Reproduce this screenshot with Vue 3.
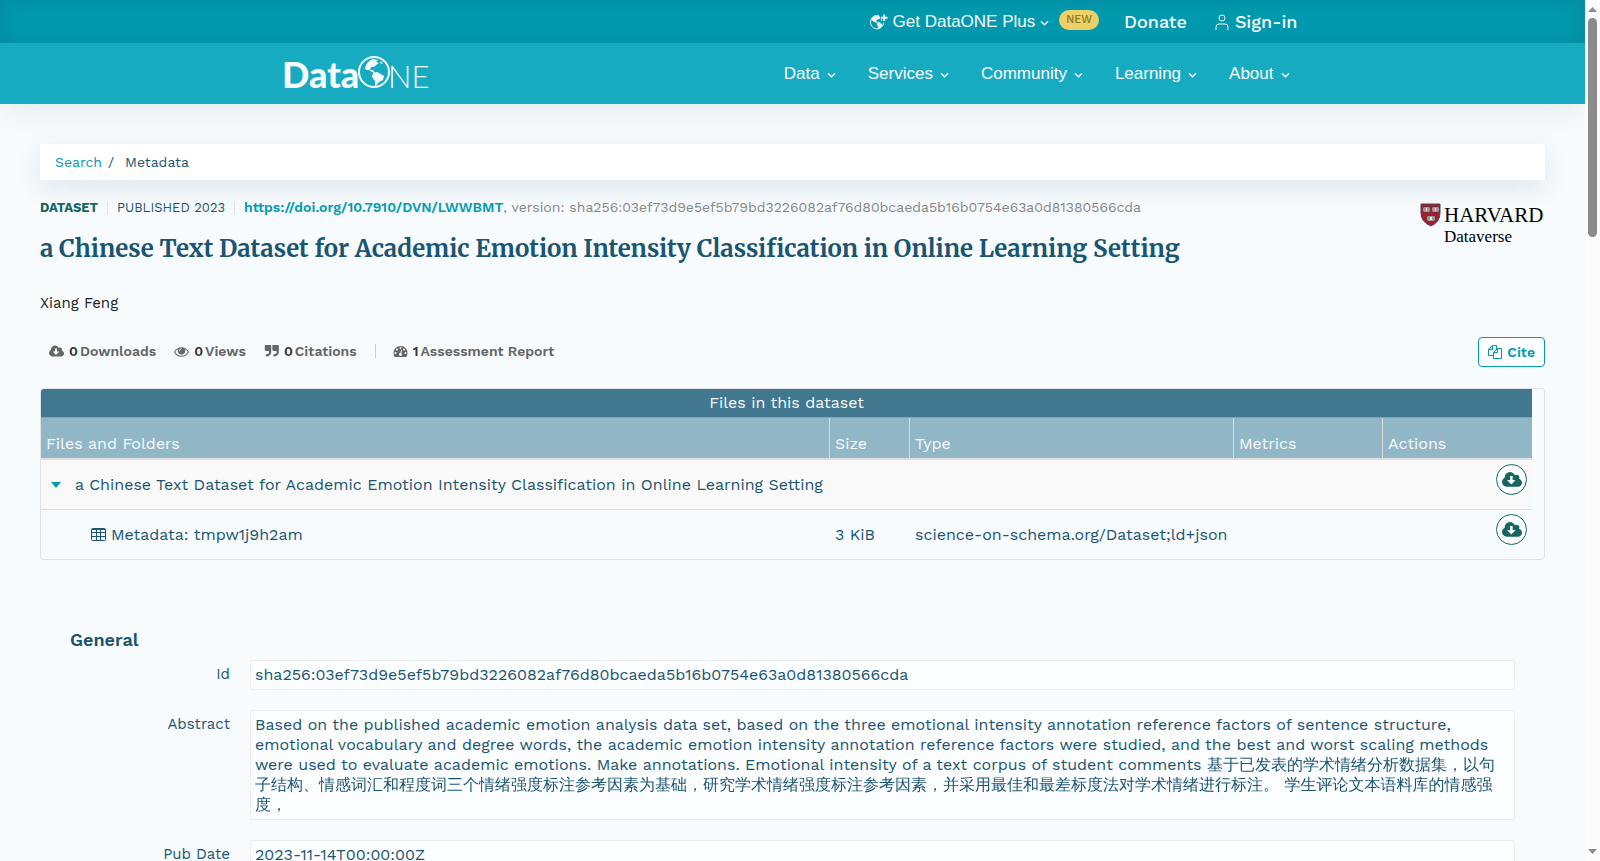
<script setup>
import { ref } from 'vue';

const navItems = ['Data', 'Services', 'Community', 'Learning', 'About'];

const icons = {
  cloud: {
    box: '-64 128 1920 1536',
    path: 'M1216 928q0-14-9-23t-23-9h-224v-352q0-13-9.5-22.5t-22.5-9.5h-192q-13 0-22.5 9.5t-9.5 22.5v352h-224q-13 0-22.5 9.5t-9.5 22.5q0 14 9 23l352 352q9 9 23 9t23-9l351-351q10-12 10-24zm640 224q0 159-112.5 271.5t-271.5 112.5h-1088q-185 0-316.5-131.5t-131.5-316.5q0-130 70-240t188-165q-2-30-2-43 0-212 150-362t362-150q156 0 285.5 87t188.5 231q71-62 166-62 106 0 181 75t75 181q0 76-41 138 130 31 213.5 135.5t83.5 238.5z',
  },
  eye: {
    box: '0 128 1792 1536',
    path: 'M1664 960q-152-236-381-353 61 104 61 225 0 185-131.5 316.5t-316.5 131.5-316.5-131.5-131.5-316.5q0-121 61-225-229 117-381 353 133 205 333.5 326.5t434.5 121.5 434.5-121.5 333.5-326.5zm-720-384q0-20-14-34t-34-14q-125 0-214.5 89.5t-89.5 214.5q0 20 14 34t34 14 34-14 14-34q0-86 61-147t147-61q20 0 34-14t14-34zm848 384q0 34-20 69-140 230-376.5 368.5t-499.5 138.5-499.5-139-376.5-368q-20-35-20-69t20-69q140-229 376.5-368t499.5-139 499.5 139 376.5 368q20 35 20 69z',
  },
  quote: {
    box: '0 192 1728 1536',
    path: 'M832 320v704q0 104-40.5 198.5t-109.5 163.5-163.5 109.5-198.5 40.5h-64q-26 0-45-19t-19-45v-128q0-26 19-45t45-19h64q106 0 181-75t75-181v-32q0-40-28-68t-68-28h-224q-80 0-136-56t-56-136v-384q0-80 56-136t136-56h384q80 0 136 56t56 136zm896 0v704q0 104-40.5 198.5t-109.5 163.5-163.5 109.5-198.5 40.5h-64q-26 0-45-19t-19-45v-128q0-26 19-45t45-19h64q106 0 181-75t75-181v-32q0-40-28-68t-68-28h-224q-80 0-136-56t-56-136v-384q0-80 56-136t136-56h384q80 0 136 56t56 136z',
  },
  gauge: {
    box: '0 128 1792 1664',
    path: 'M384 1152q0-53-37.5-90.5t-90.5-37.5-90.5 37.5-37.5 90.5 37.5 90.5 90.5 37.5 90.5-37.5 37.5-90.5zm192-448q0-53-37.5-90.5t-90.5-37.5-90.5 37.5-37.5 90.5 37.5 90.5 90.5 37.5 90.5-37.5 37.5-90.5zm428 481l101-382q6-26-7.5-48.5t-38.5-29.5-48 6.5-30 39.5l-101 382q-60 5-107 43.5t-63 98.5q-20 77 20 146t117 89 146-20 89-117q16-60-6-117t-72-91zm660-33q0-53-37.5-90.5t-90.5-37.5-90.5 37.5-37.5 90.5 37.5 90.5 90.5 37.5 90.5-37.5 37.5-90.5zm-640-640q0-53-37.5-90.5t-90.5-37.5-90.5 37.5-37.5 90.5 37.5 90.5 90.5 37.5 90.5-37.5 37.5-90.5zm448 192q0-53-37.5-90.5t-90.5-37.5-90.5 37.5-37.5 90.5 37.5 90.5 90.5 37.5 90.5-37.5 37.5-90.5zm320 448q0 261-141 483-19 29-54 29h-1402q-35 0-54-29-141-221-141-483 0-182 71-348t191-286 286-191 348-71 348 71 286 191 191 286 71 348z',
  },
};

const metrics = [
  { icon: icons.cloud, count: 0, label: 'Downloads' },
  { icon: icons.eye, count: 0, label: 'Views' },
  { icon: icons.quote, count: 0, label: 'Citations' },
  { icon: icons.gauge, count: 1, label: 'Assessment Report', divided: true },
];

const title = 'a Chinese Text Dataset for Academic Emotion Intensity Classification in Online Learning Setting';

const expanded = ref(true);

const fields = [
  { label: 'Id', value: 'sha256:03ef73d9e5ef5b79bd3226082af76d80bcaeda5b16b0754e63a0d81380566cda' },
  {
    label: 'Abstract',
    value:
      'Based on the published academic emotion analysis data set, based on the three emotional intensity annotation reference factors of sentence structure, emotional vocabulary and degree words, the academic emotion intensity annotation reference factors were studied, and the best and worst scaling methods were used to evaluate academic emotions. Make annotations. Emotional intensity of a text corpus of student comments 基于已发表的学术情绪分析数据集，以句子结构、情感词汇和程度词三个情绪强度标注参考因素为基础，研究学术情绪强度标注参考因素，并采用最佳和最差标度法对学术情绪进行标注。 学生评论文本语料库的情感强度，',
  },
  { label: 'Pub Date', value: '2023-11-14T00:00:00Z' },
];
</script>

<template>
  <div class="window">
    <div class="page">
      <header>
        <div class="top-bar">
          <div class="container top-links">
            <button type="button" class="nav-button plus">
              <svg class="plus-globe" viewBox="0 0 20 18" fill="none">
                <path d="M15.5 9.5A7 7 0 1 1 10.5 2.500" stroke="currentColor" />
                <path
                  d="M2 6Q4 2 8 2L11 3 12 5 10 6 8 7 8 9 10 10 8 10 4 8ZM9 10L11 9 14 12 13 14 10 16 9 13 8 12ZM12 6L14 7 13 8Z"
                  fill="currentColor"
                />
                <path d="M16 1v7M12.500 4.500h7" stroke="currentColor" stroke-width="2" />
              </svg>
              Get DataONE Plus
              <svg class="chevron" viewBox="0 0 10 7"><path d="M1 1l4 4 4-4" /></svg>
            </button>
            <span class="badge">NEW</span>
            <a href="#donate" class="top-link donate">Donate</a>
            <a href="#signin" class="top-link signin">
              <svg viewBox="0 0 14 16" fill="none" stroke="currentColor">
                <circle cx="7" cy="4" r="3" />
                <path d="M1 16v-3q0-3 3-3h6q3 0 3 3v3" />
              </svg>
              Sign-in
            </a>
          </div>
        </div>
        <div class="main-bar">
          <div class="container main-nav">
            <a href="#home" class="logo" aria-label="DataONE">
              <svg viewBox="0 0 146 32" fill="currentColor">
                <text x="-3" y="32" class="logo-bold">Data</text>
                <circle cx="89" cy="16" r="15" fill="none" stroke="currentColor" stroke-width="2" />
                <path
                  d="M80 12Q82 5 88 3L93 4 91 6 94 7 91 9 89 11 86 11 85 14 88 14 90 17 87 16 84 14 81 14ZM88 17L92 16 99 20 98 24 94 26 91 30 90 30 90 25 87 21ZM95 5L98 7 96 8Z"
                />
                <text x="103" y="32" class="logo-thin">NE</text>
              </svg>
            </a>
            <nav>
              <button v-for="item in navItems" :key="item" type="button" class="nav-button">
                {{ item }}
                <svg class="chevron" viewBox="0 0 10 7"><path d="M1 1l4 4 4-4" /></svg>
              </button>
            </nav>
          </div>
        </div>
      </header>

      <main>
        <div class="breadcrumb">
          <a href="#search">Search</a><span class="slash">/</span><span>Metadata</span>
        </div>

        <div class="citation-head">
          <div class="citation-text">
            <p class="identifiers">
              <strong class="kind">DATASET</strong>
              <span class="published">PUBLISHED 2023</span>
              <span class="version"><a href="#doi">https://doi.org/10.7910/DVN/LWWBMT</a>, version: sha256:03ef73d9e5ef5b79bd3226082af76d80bcaeda5b16b0754e63a0d81380566cda</span>
            </p>
            <h1>{{ title }}</h1>
          </div>
          <svg class="harvard" viewBox="0 0 124 42">
            <path d="M0 1h19v9q0 9-9 13Q0 19 0 10Z" fill="#a51c30" stroke="#4a4a4a" />
            <g fill="#eee" stroke="#444">
              <rect x="2" y="4" width="7" height="5" />
              <rect x="11" y="4" width="7" height="5" />
              <rect x="6" y="13" width="8" height="5" />
            </g>
            <path d="M4 5v3M7 5v3M13 5v3M16 5v3M8 14v3M12 14v3" stroke="#a51c30" />
            <text x="23" y="19" class="harvard-name">HARVARD</text>
            <text x="23" y="39" class="harvard-sub">Dataverse</text>
          </svg>
        </div>

        <p class="author">Xiang Feng</p>

        <div class="toolbar">
          <ul class="metrics">
            <li v-for="metric in metrics" :key="metric.label" :class="{ divided: metric.divided }">
              <svg :viewBox="metric.icon.box" fill="currentColor"><path :d="metric.icon.path" /></svg>
              <b>{{ metric.count }}</b>
              <span>{{ metric.label }}</span>
            </li>
          </ul>
          <button type="button" class="cite">
            <svg viewBox="0 0 1792 1792" fill="currentColor">
              <path
                d="M1696 384q40 0 68 28t28 68v1216q0 40-28 68t-68 28h-960q-40 0-68-28t-28-68v-288h-544q-40 0-68-28t-28-68v-672q0-40 20-88t48-76l408-408q28-28 76-48t88-20h416q40 0 68 28t28 68v328q68-40 128-40h416zm-544 213l-299 299h299v-299zm-640-384l-299 299h299v-299zm196 647l316-316v-416h-384v416q0 40-28 68t-68 28h-416v640h512v-256q0-40 20-88t48-76zm956 804v-1152h-384v416q0 40-28 68t-68 28h-416v640h896z"
              />
            </svg>
            Cite
          </button>
        </div>

        <section class="files">
          <table>
            <caption>Files in this dataset</caption>
            <colgroup>
              <col class="col-name" />
              <col class="col-size" />
              <col class="col-type" />
              <col class="col-metrics" />
              <col class="col-actions" />
            </colgroup>
            <thead>
              <tr>
                <th>Files and Folders</th>
                <th>Size</th>
                <th>Type</th>
                <th>Metrics</th>
                <th>Actions</th>
              </tr>
            </thead>
            <tbody>
              <tr class="folder">
                <td colspan="4">
                  <div class="folder-name">
                    <button type="button" class="toggle" aria-label="Toggle folder" @click="expanded = !expanded">
                      <svg viewBox="0 0 10 6"><path d="M0 0h10L5 6Z" fill="currentColor" /></svg>
                    </button>
                    {{ title }}
                  </div>
                </td>
                <td class="actions">
                  <button type="button" class="download" aria-label="Download all">
                    <svg :viewBox="icons.cloud.box" fill="currentColor"><path :d="icons.cloud.path" /></svg>
                  </button>
                </td>
              </tr>
              <tr v-if="expanded">
                <td>
                  <div class="file-name">
                    <svg viewBox="0 0 15 13" fill="none" stroke="currentColor">
                      <rect x="0.500" y="0.500" width="14" height="12" rx="1" />
                      <path d="M1 1.500h13M1 4.500h13M1 8.500h13M5.500 2v10M9.500 2v10" />
                    </svg>
                    Metadata: tmpw1j9h2am
                  </div>
                </td>
                <td>3 KiB</td>
                <td>science-on-schema.org/Dataset;ld+json</td>
                <td></td>
                <td class="actions">
                  <button type="button" class="download" aria-label="Download file">
                    <svg :viewBox="icons.cloud.box" fill="currentColor"><path :d="icons.cloud.path" /></svg>
                  </button>
                </td>
              </tr>
            </tbody>
          </table>
        </section>

        <section class="general">
          <h2>General</h2>
          <dl>
            <div v-for="field in fields" :key="field.label" class="field">
              <dt>{{ field.label }}</dt>
              <dd>{{ field.value }}</dd>
            </div>
          </dl>
        </section>
      </main>
    </div>

    <div class="scrollbar" aria-hidden="true">
      <svg viewBox="0 0 9 5"><path d="M0 5h9L4.500 0Z" /></svg>
      <div class="track"><div class="thumb"></div></div>
      <svg viewBox="0 0 9 5"><path d="M0 0h9L4.500 5Z" /></svg>
    </div>
  </div>
</template>

<style>
body {
  margin: 0;
  overflow: hidden;
}
</style>

<style scoped>
.window {
  display: grid;
  grid-template-columns: minmax(0, 1fr) 15px;
  height: 100vh;
  background: #f7fbfe;
  color: #1a5571;
  font-family: 'Work Sans', Inter, 'WenQuanYi Zen Hei', 'Noto Sans CJK SC', sans-serif;
  font-size: 16px;
  line-height: 20px;
}

.page {
  overflow: hidden;
}

a {
  color: #029bb0;
  text-decoration: none;
}

button {
  font: inherit;
  cursor: pointer;
}

p,
h1,
h2,
ul,
dl,
dd {
  margin: 0;
  padding: 0;
}

header {
  box-shadow: 0 4px 32px rgba(60, 80, 90, 0.1);
}

.container {
  display: flex;
  align-items: center;
  width: 1016px;
  max-width: 100%;
  height: 100%;
  margin: 0 auto;
}

.top-bar {
  height: 43px;
  background: #029bb0;
  box-shadow: inset 0 0 24px rgba(0, 110, 130, 0.4);
}

.top-links {
  justify-content: flex-end;
}

.nav-button {
  display: flex;
  align-items: center;
  gap: 7px;
  padding: 0;
  border: 0;
  background: none;
  color: #f7fbff;
  font-family: 'Liberation Sans', Arial, sans-serif;
  font-size: 17px;
}

.plus {
  gap: 5px;
}

.plus-globe {
  width: 19px;
  height: 18px;
}

.chevron {
  width: 9px;
  height: 7px;
  margin-top: 4px;
  fill: none;
  stroke: currentColor;
  stroke-width: 1.5;
}

.badge {
  margin: 0 25px 4px 10px;
  padding: 0 7px;
  border-radius: 10px;
  background: #ecd068;
  color: #8a7420;
  font-size: 11px;
  font-weight: 500;
}

.top-link {
  display: flex;
  align-items: center;
  gap: 6px;
  color: #f7fbff;
  font-size: 18px;
  font-weight: 500;
}

.donate {
  margin-right: 28px;
}

.signin {
  margin-right: 3px;
}

.signin svg {
  width: 14px;
  height: 16px;
}

.main-bar {
  height: 61px;
  background: #17abc1;
}

.main-nav {
  justify-content: space-between;
}

.main-nav nav {
  display: flex;
  gap: 32px;
  margin-right: 11px;
}

.logo {
  margin-bottom: 4px;
  color: #f7fbff;
}

.logo svg {
  display: block;
  width: 146px;
  height: 32px;
  overflow: visible;
}

.logo-bold {
  font: 900 36px Lato, sans-serif;
}

.logo-thin {
  font: 300 31px Lato, sans-serif;
}

main {
  padding: 40px;
}

.breadcrumb {
  display: flex;
  align-items: center;
  height: 36px;
  padding: 0 15px;
  border-radius: 2px;
  background: #fff;
  box-shadow: 0 8px 24px rgba(60, 80, 90, 0.12);
  font-size: 14px;
}

.slash {
  margin: 0 11px 0 6px;
}

.citation-head {
  display: flex;
  justify-content: space-between;
  margin-top: 17px;
}

.identifiers {
  display: flex;
  align-items: baseline;
  font-size: 13px;
}

.identifiers > * + *::before {
  content: '';
  display: inline-block;
  width: 1px;
  height: 14px;
  margin: 0 9px;
  background: #dde3e6;
  vertical-align: -3px;
}

.kind {
  color: #146660;
}

.version {
  color: #888;
  font-size: 14px;
}

.version a {
  font-weight: 600;
}

h1 {
  margin-top: 13px;
  font: 700 24px/36px 'Merriweather', 'DejaVu Serif Condensed', 'Liberation Serif', serif;
}

.harvard {
  flex: none;
  width: 124px;
  height: 42px;
  margin-top: 6px;
  overflow: visible;
}

.harvard-name {
  font: 21px 'Liberation Serif', serif;
}

.harvard-sub {
  font: 17px 'Liberation Serif', serif;
}

.author {
  margin-top: 26px;
  color: #222;
  font-size: 15px;
}

.toolbar {
  display: flex;
  align-items: center;
  justify-content: space-between;
  margin-top: 24px;
}

.metrics {
  display: flex;
  gap: 18px;
  margin-bottom: 2px;
  padding-left: 9px;
  color: #666;
  font-size: 14px;
  font-weight: 600;
  list-style: none;
}

.metrics li {
  display: flex;
  align-items: center;
}

.metrics svg {
  width: 15px;
  height: 13px;
  margin-right: 5px;
}

.metrics b {
  margin-right: 2px;
  color: #333;
  font-weight: 600;
}

.metrics .divided::before {
  content: '';
  width: 1px;
  height: 14px;
  margin-right: 17px;
  background: #ccc;
}

.cite {
  display: flex;
  align-items: center;
  gap: 5px;
  height: 30px;
  padding: 0 9px;
  border: 1px solid #029bb0;
  border-radius: 4px;
  background: #fff;
  color: #029bb0;
  font-size: 14px;
  font-weight: 600;
}

.cite svg {
  width: 14px;
  height: 14px;
}

.files {
  margin-top: 21px;
  padding-right: 12px;
  border: 1px solid #dfe3e6;
  border-radius: 4px;
  overflow: hidden;
}

table {
  width: 100%;
  border-spacing: 0;
  table-layout: fixed;
}

caption {
  height: 28px;
  border-bottom: 1px solid #82a4b3;
  background: #41788f;
  color: #f7fbff;
  line-height: 28px;
}

.col-size {
  width: 80px;
}

.col-type {
  width: 324px;
}

.col-metrics {
  width: 149px;
}

.col-actions {
  width: 150px;
}

th {
  height: 20px;
  padding: 16px 5px 4px;
  border-bottom: 2px solid #ddd;
  background: #91b6c5;
  color: #f7fbff;
  font-weight: 400;
  text-align: left;
}

th + th {
  border-left: 1px solid #ddd;
}

td {
  height: 49px;
  padding: 0 0 0 6px;
  white-space: nowrap;
}

.folder td {
  border-bottom: 1px solid #ddd;
  background: #f9f9f9;
}

.folder-name {
  display: flex;
  align-items: center;
}

.toggle {
  width: 10px;
  margin: 0 14px 0 4px;
  padding: 0;
  border: 0;
  background: none;
  color: #029bb0;
}

.toggle svg {
  display: block;
  width: 10px;
}

.file-name {
  display: flex;
  align-items: center;
  gap: 5px;
  padding-left: 44px;
}

.file-name svg {
  width: 15px;
  height: 13px;
}

.actions {
  padding: 4px 5px 0 0;
  vertical-align: top;
  height: 45px;
}

.download {
  display: flex;
  align-items: center;
  justify-content: center;
  width: 31px;
  height: 31px;
  margin-left: auto;
  padding: 0;
  border: 1px solid #146660;
  border-radius: 50%;
  background: #fff;
  color: #146660;
}

.download svg {
  width: 20px;
  height: 16px;
}

.general {
  margin-top: 70px;
  padding: 0 30px;
}

h2 {
  font-size: 18px;
  font-weight: 600;
  line-height: 20px;
}

dl {
  margin-top: 10px;
}

.field {
  display: grid;
  grid-template-columns: 160px minmax(0, 1fr);
  gap: 20px;
  margin-bottom: 20px;
}

dt {
  padding-top: 4px;
  font-size: 15px;
  text-align: right;
}

dd {
  padding: 4px;
  border: 1px solid #eee;
  border-radius: 3px;
  background: #fcfdff;
}

.scrollbar {
  display: flex;
  flex-direction: column;
  align-items: center;
  gap: 6px;
  padding: 7px 0;
  background: #fcfcfc;
}

.scrollbar svg {
  width: 9px;
  height: 5px;
  fill: #8b8b8b;
}

.track {
  flex: 1;
}

.thumb {
  width: 9px;
  height: 219px;
  border-radius: 5px;
  background: #8b8b8b;
}
</style>
